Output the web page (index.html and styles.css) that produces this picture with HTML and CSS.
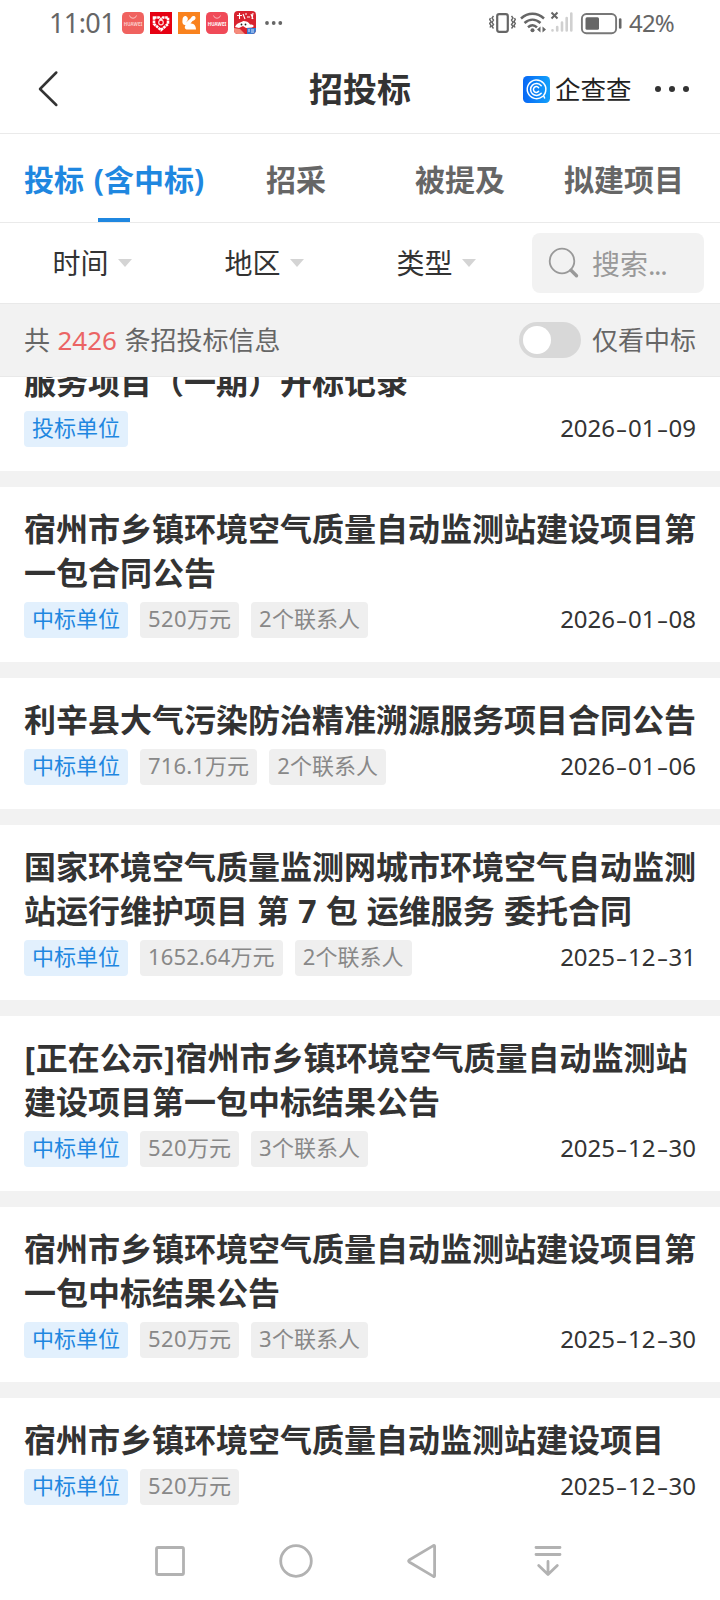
FILE: index.html
```html
<!DOCTYPE html>
<html lang="zh-CN">
<head>
<meta charset="utf-8">
<title>招投标</title>
<link rel="stylesheet" href="styles.css">
</head>
<body>
<div class="status">
  <span class="clock">11:01</span>
  <div class="apps">
    <svg width="24" height="24" viewBox="0 0 24 24"><rect x="1" y="1" width="22" height="22" rx="4.5" fill="#f0625f"/><path d="M8.500 4.500a3.600 3.600 0 0 0 7 0" fill="none" stroke="#fbc4c0"/><text x="12" y="15" class="hw">HUAWEI</text></svg>
    <svg width="24" height="24" viewBox="0 0 24 24"><rect x="1" y="1" width="22" height="22" fill="#e60012"/><path d="M5 6.500h5l2 2 2-2h5v6.500l-7 6-7-6z" fill="none" stroke="#fff" stroke-width="2.600" stroke-dasharray="2.600 .6"/><circle cx="12" cy="11.500" r="2.300" fill="none" stroke="#ffd0d0" stroke-width="1.200"/></svg>
    <svg width="24" height="24" viewBox="0 0 24 24"><rect x="1" y="1" width="22" height="22" fill="#f9821e"/><path d="M5.500 9c0-4 3.500-5.500 5-2.500 1 2.500-.5 3.500-1.500 5l5-4.500c1-2.500 4-2.500 4.500-.5.500 2-1.500 3-3 3.500l-2 2.500c3.500-.5 5.500 2.500 5.500 6h-8.500c-2.500 0-3.500-2-2-4.500-2 0-3.500-1-3-5z" fill="#fff"/></svg>
    <svg width="24" height="24" viewBox="0 0 24 24"><rect x="1" y="1" width="22" height="22" rx="4.500" fill="#f04a58"/><path d="M8.500 4.500a3.600 3.600 0 0 0 7 0" fill="none" stroke="#fbb4bc"/><text x="12" y="15" class="hw bright">HUAWEI</text></svg>
    <svg width="24" height="24" viewBox="0 0 24 24"><rect x="1" y="0" width="22" height="23" rx="4" fill="#d8232f"/><path d="M4 4.500h5M6.500 2v6M10 3l2 5M14 3h-2M14 6h3M18 3l2 5M20 2l-1 6" stroke="#fff" stroke-width="1.100"/><path d="M2 16c2-5 6-4 8-6 3 0 6 1 7 3.500 4 0 5 2 2 3l-6 .5-3-2-4 2z" fill="#fff"/><circle cx="8.500" cy="13.500" r=".9" fill="#222"/><circle cx="12.500" cy="13.500" r=".9" fill="#222"/><path d="M1 17l6 1 5 5H5q-4 0-4-4z" fill="#f58b7b"/><path d="M14 17h9v2q0 4-4 4h-5z" fill="#3a7bd0"/><path d="M16 21v-3M18 19h3M18 21h3" stroke="#d6e7ff"/></svg>
  </div>
  <svg class="more-dots" width="20" height="6" viewBox="0 0 20 6" fill="#666"><circle cx="3" cy="3" r="1.900"/><circle cx="9.700" cy="3" r="1.900"/><circle cx="16.300" cy="3" r="1.900"/></svg>
  <svg class="signals" width="136" height="26" viewBox="0 0 136 26" fill="none" stroke="#666">
    <rect x="8.200" y="4.200" width="10.600" height="17.600" rx="2" stroke-width="2.200"/>
    <path d="M4.500 6l-1.500 2 1.500 2-1.500 2.500 1.500 2-1.500 2 1.500 2M1.500 8l-.8 1.500L2 11.500l-1.300 2L2 15.500l-1 2M22.500 6l1.500 2-1.500 2 1.500 2.500-1.500 2 1.500 2-1.500 2M25.500 8l.8 1.500-1.300 2 1.300 2-1.300 2 1 2" stroke-width="1.400"/>
    <path d="M32 8.500c7-6.300 16-6.300 23 0M35.500 13c5-4.500 11-4.500 16 0M39 17.300c3-2.700 6.200-2.700 9 0" stroke-width="2.500"/>
    <circle cx="43.500" cy="20.300" r="2" fill="#666" stroke="none"/>
    <path d="M51.500 16.500v6l-3.500-3zM53.500 16.500v6l3.500-3z" fill="#666" stroke="none"/>
    <path d="M62.500 2.500l6 6m0-6l-6 6" stroke-width="2"/>
    <g stroke="#d0d0d0" stroke-width="2.600" stroke-linecap="round"><path d="M63.500 20.300v.2M68.200 17v3.500M73 12.500v8M77.700 8v12.500M82.300 3.500v17"/></g>
    <rect x="92.900" y="4" width="34.200" height="19.200" rx="4.500" stroke="#777" stroke-width="1.900"/>
    <rect x="96.500" y="7.300" width="13.500" height="12.500" rx="1.500" fill="#666" stroke="none"/>
    <path d="M131.200 9.500v8" stroke-width="2.600" stroke-linecap="round"/>
  </svg>
  <span class="battery">42%</span>
</div>

<header class="header">
  <svg class="back" width="24" height="38" viewBox="0 0 24 38" fill="none" stroke="#333" stroke-width="2.500" stroke-linecap="round" stroke-linejoin="round"><path d="M20.300 2.500L4 19l16.300 16"/></svg>
  <h1 class="heading">招投标</h1>
  <div class="brand">
    <svg width="27" height="27" viewBox="0 0 27 27"><defs><linearGradient id="g"><stop stop-color="#0868f5"/><stop offset="1" stop-color="#12a0fa"/></linearGradient></defs><rect width="27" height="27" rx="4.500" fill="url(#g)"/><g fill="none" stroke="#fff" stroke-linecap="round"><path d="M19.500 20.500A9.300 9.300 0 1 1 22.600 15.500q-.5 2.500-2 4l1 2.500" stroke-width="1.500"/><path d="M18.200 9.700a6 6 0 1 0 0 7.600" stroke-width="1.500"/><path d="M15.600 11.700a2.900 2.900 0 1 0 0 3.600" stroke-width="1.500"/></g></svg>
    <span class="brand-name">企查查</span>
  </div>
  <svg class="menu" width="38" height="10" viewBox="0 0 38 10" fill="#333"><circle cx="5" cy="5" r="3"/><circle cx="19" cy="5" r="3"/><circle cx="33" cy="5" r="3"/></svg>
</header>

<nav class="tabs">
  <div class="tab active">投标 (含中标)</div>
  <div class="tab">招采</div>
  <div class="tab">被提及</div>
  <div class="tab">拟建项目</div>
</nav>

<div class="filters">
  <div class="filter">时间<i class="caret"></i></div>
  <div class="filter">地区<i class="caret"></i></div>
  <div class="filter">类型<i class="caret"></i></div>
  <div class="search">
    <svg width="32" height="32" viewBox="0 0 32 32" fill="none" stroke="#999"><circle cx="14" cy="14" r="12.300" stroke-width="1.800"/><path d="M23 23.300l5.500 5.500" stroke-width="3.400" stroke-linecap="round"/></svg>
    <span>搜索<i class="ellipsis">...</i></span>
  </div>
</div>

<div class="summary">
  <span class="total">共 <b class="num">2426</b> 条招投标信息</span>
  <span class="toggle"></span>
  <span class="toggle-label">仅看中标</span>
</div>

<main class="list">
  <article class="card clipped">
    <h2 class="title">服务项目（一期）开标记录</h2>
    <div class="meta"><span class="tag role">投标单位</span><time class="date">2026<i>-</i>01<i>-</i>09</time></div>
  </article>
  <article class="card">
    <h2 class="title">宿州市乡镇环境空气质量自动监测站建设项目第<br>一包合同公告</h2>
    <div class="meta"><span class="tag role">中标单位</span><span class="tag"><b>520</b>万元</span><span class="tag"><b>2</b>个联系人</span><time class="date">2026<i>-</i>01<i>-</i>08</time></div>
  </article>
  <article class="card">
    <h2 class="title">利辛县大气污染防治精准溯源服务项目合同公告</h2>
    <div class="meta"><span class="tag role">中标单位</span><span class="tag"><b class="decimal">716.1</b>万元</span><span class="tag"><b>2</b>个联系人</span><time class="date">2026<i>-</i>01<i>-</i>06</time></div>
  </article>
  <article class="card">
    <h2 class="title">国家环境空气质量监测网城市环境空气自动监测<br>站运行维护项目 第 7 包 运维服务 委托合同</h2>
    <div class="meta"><span class="tag role">中标单位</span><span class="tag"><b class="decimal">1652.64</b>万元</span><span class="tag"><b>2</b>个联系人</span><time class="date">2025<i>-</i>12<i>-</i>31</time></div>
  </article>
  <article class="card">
    <h2 class="title"><span class="bracket">[</span>正在公示<span class="bracket">]</span>宿州市乡镇环境空气质量自动监测站<br>建设项目第一包中标结果公告</h2>
    <div class="meta"><span class="tag role">中标单位</span><span class="tag"><b>520</b>万元</span><span class="tag"><b>3</b>个联系人</span><time class="date">2025<i>-</i>12<i>-</i>30</time></div>
  </article>
  <article class="card">
    <h2 class="title">宿州市乡镇环境空气质量自动监测站建设项目第<br>一包中标结果公告</h2>
    <div class="meta"><span class="tag role">中标单位</span><span class="tag"><b>520</b>万元</span><span class="tag"><b>3</b>个联系人</span><time class="date">2025<i>-</i>12<i>-</i>30</time></div>
  </article>
  <article class="card">
    <h2 class="title">宿州市乡镇环境空气质量自动监测站建设项目</h2>
    <div class="meta"><span class="tag role">中标单位</span><span class="tag"><b>520</b>万元</span><time class="date">2025<i>-</i>12<i>-</i>30</time></div>
  </article>
</main>

<footer class="sysnav">
  <svg viewBox="0 0 36 36"><rect x="4.500" y="4.500" width="27" height="27" rx="1.500"/></svg>
  <svg viewBox="0 0 36 36"><circle cx="18" cy="18" r="15.300"/></svg>
  <svg viewBox="0 0 36 36"><path d="M30.600 3.200v29.600q0 1.200-1.200.6L5.200 19q-1.200-1 0-2L29.400 2.600q1.200-.6 1.200.6z"/></svg>
  <svg viewBox="0 0 36 36"><path d="M6 4.500h24M6 11.500h24M18 18.500v12.500M8.700 22.500l9.300 9 9.300-9"/></svg>
</footer>
</body>
</html>
```

FILE: styles.css
```css
* { box-sizing: border-box; margin: 0; padding: 0; }

body {
  width: 720px;
  height: 1600px;
  overflow: hidden;
  background: #fff;
  color: #333;
  font-family: "Noto Sans", "Noto Sans CJK SC", sans-serif;
  display: flex;
  flex-direction: column;
}

svg { display: block; flex: none; }
i { font-style: normal; }

.status {
  height: 45px;
  flex: none;
  display: flex;
  align-items: center;
  padding-left: 49px;
  color: #666;
}
.clock { width: 72px; font-size: 27px; letter-spacing: -.6px; line-height: 45px; }
.apps { display: flex; gap: 4px; }
.hw { font: bold 4.5px "Noto Sans", sans-serif; fill: #fbd0cc; text-anchor: middle; }
.bright { fill: #fff; }
.more-dots { margin-left: 7px; }
.signals { margin-left: 205px; }
.battery { margin-left: 4px; font-size: 24px; line-height: 45px; letter-spacing: -.8px; }

.header {
  height: 89px;
  flex: none;
  display: flex;
  align-items: center;
  padding-left: 36px;
  border-bottom: 1px solid #eaeaea;
}
.heading { margin-left: 249px; width: 103px; font-size: 34px; line-height: 44px; font-weight: 700; }
.brand { margin-left: 111px; display: flex; align-items: center; gap: 5px; }
.brand-name { width: 78px; font-size: 25.500px; line-height: 36px; color: #222; }
.menu { margin-left: 20px; }

.tabs {
  height: 89px;
  flex: none;
  display: grid;
  grid-template-columns: 200px 164px 164px 164px;
  grid-template-rows: 88px;
  padding: 0 14px;
  border-bottom: 1px solid #eaeaea;
}
.tab {
  position: relative;
  text-align: center;
  font-size: 30px;
  font-weight: 700;
  line-height: 91px;
  color: #666;
  white-space: nowrap;
}
.active { color: #1f87e0; word-spacing: 2px; }
.active::after {
  content: "";
  position: absolute;
  left: 84px;
  bottom: 0;
  width: 32px;
  height: 4px;
  background: #1f87e0;
}

.filters {
  height: 80px;
  flex: none;
  display: grid;
  grid-template-columns: 172px 172px 172px 182px;
  padding-left: 6px;
  align-items: center;
}
.filter { display: flex; justify-content: center; align-items: center; gap: 9px; font-size: 28px; line-height: 60px; }
.caret { border: 7px solid transparent; border-top: 8px solid #d4d4d4; border-bottom: 0; }
.search {
  width: 172px;
  height: 60px;
  margin-left: 10px;
  padding-left: 16px;
  display: flex;
  align-items: center;
  gap: 12px;
  border-radius: 8px;
  background: #f2f2f2;
  color: #999;
  font-size: 28px;
}
.ellipsis { letter-spacing: -1.400px; }

.summary {
  height: 74px;
  flex: none;
  display: flex;
  align-items: center;
  padding: 0 24px;
  background: #f2f2f2;
  border-top: 1px solid #e9e9e9;
  border-bottom: 1px solid #e9e9e9;
  color: #666;
  font-size: 26px;
  line-height: 72px;
}
.total { word-spacing: .7px; }
.num { font-weight: 400; color: #eb6464; }
.toggle { margin-left: auto; width: 62px; height: 36px; padding: 4px; border-radius: 18px; background: #d8d8d8; }
.toggle::before { content: ""; display: block; width: 28px; height: 28px; border-radius: 50%; background: #fff; }
.toggle-label { margin-left: 11px; }

.list {
  height: 1152px;
  flex: none;
  overflow: hidden;
  display: flex;
  flex-direction: column;
  gap: 16px;
  background: #f2f2f2;
}
.card { flex: none; padding: 20px 24px 24px; background: #fff; }
.clipped { padding-top: 0; }
.clipped .title { margin-top: -17px; }
.title { font-size: 32px; line-height: 44px; font-weight: 700; white-space: nowrap; word-spacing: .8px; margin-bottom: 7px; }
.bracket { display: inline-block; width: 11.700px; text-align: center; }
.meta { display: flex; align-items: center; gap: 12px; height: 36px; }
.tag {
  height: 36px;
  padding: 0 8px;
  border-radius: 4px;
  background: #efefef;
  color: #888;
  font-size: 22px;
  line-height: 32px;
  white-space: nowrap;
}
.tag b { font-weight: 400; letter-spacing: .4px; }
.tag .decimal { letter-spacing: .17px; }
.role { background: #e2f0fd; color: #1f87e0; }
.date { margin-left: auto; height: 36px; font-size: 24px; line-height: 34px; }
.date i { display: inline-block; width: 13px; text-align: center; transform: scaleX(1.5); }

.sysnav {
  flex: 1;
  display: grid;
  grid-template-columns: repeat(4, 126px);
  justify-items: center;
  padding: 14px 0 0 107px;
}
.sysnav svg { width: 36px; height: 36px; fill: none; stroke: #b2b2b2; stroke-width: 2.800px; stroke-linecap: round; stroke-linejoin: round; }
```
